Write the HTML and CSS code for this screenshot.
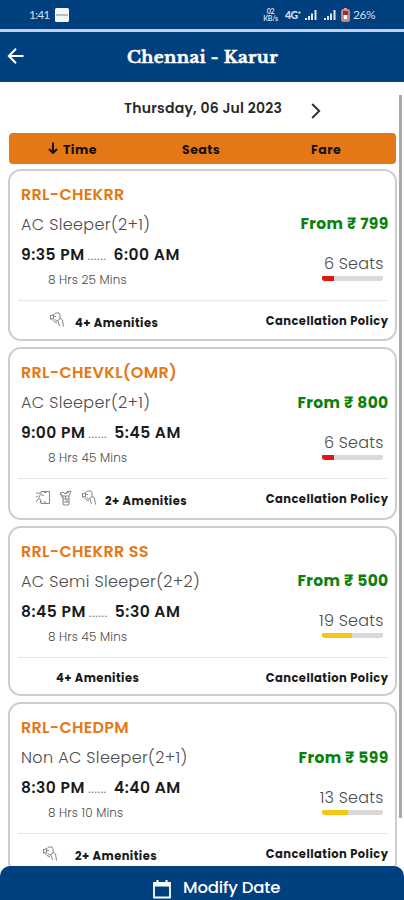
FILE: index.html
```
<!DOCTYPE html>
<html lang="en">
<head>
<meta charset="utf-8">
<title>Chennai - Karur</title>
<link rel="stylesheet" href="styles.css">
</head>
<body>
<svg class="defs" width="0" height="0">
  <defs>
    <symbol id="charger" viewBox="0 0 16 16">
      <path d="M5.500 2.500L6.500 1H10l1 1.500V7l-3 2-2.500-1.500M1.500 4l3-1.500v4.500L1.500 6.500M1.500 3v4.500M4.500 4.500H7M3 7.500l2 2 3 1.500M11 6l2.500 2 1 6.500M9 9l1.500 5"/>
    </symbol>
    <symbol id="exit" viewBox="0 0 16 16">
      <path d="M6 4V1.500h8.500v12H6V11M1 3l3 0 2.500 2L9 5.500M5 5L3.500 8.500 6 10l-1 3M3.500 8.500L1 12M1 7l2-1M9 2.500h2.500M8.500 12H11"/>
    </symbol>
    <symbol id="bottle" viewBox="0 0 16 16">
      <path d="M5 6h6v8.500q-3 1.500-6 0zM5 6L2 3l3-1 2 2 2-2.500L13 1l-2 5M6 3.500l5-1M5 9h6M5 12h6M7.500 6v3M9 9v3M2.500 4l2 4"/>
    </symbol>
    <symbol id="signal" viewBox="0 0 12 10">
      <path d="M0 8h2v2H0zM3 6h2v4H3zM6 3.500h2V10H6zM9.500 0h2v10h-2z"/>
    </symbol>
  </defs>
</svg>

<div class="status">
  <span class="clock">1:41</span>
  <svg class="note" viewBox="0 0 14 14"><rect width="14" height="14" rx="1.500" fill="#f4f5f8"/><path d="M1 7h12" stroke="#8296b4" stroke-width="1.200"/></svg>
  <div class="rate"><span>02</span><span>KB/s</span></div>
  <span class="net">4G⁺</span>
  <svg class="sig"><use href="#signal"/></svg>
  <svg class="sig second"><use href="#signal"/></svg>
  <svg class="battery" viewBox="0 0 9 14"><path d="M3 1h3" stroke="#e79a8b" stroke-width="2"/><rect x="1" y="2" width="7" height="11" rx="1" fill="#7c3b4b" stroke="#ee9d8c" stroke-width="1.500"/><path d="M2.500 7h4v4.500h-4z" fill="#fff"/></svg>
  <span class="pct">26%</span>
</div>
<header class="appbar">
  <svg class="back" viewBox="0 0 18 18"><path d="M16.500 9H2M9 1.800L1.800 9 9 16.200"/></svg>
  <h1>Chennai - Karur</h1>
</header>

<main class="content">
  <div class="date">
    <span>Thursday, 06 Jul 2023</span>
    <svg class="next" viewBox="0 0 10 16"><path d="M1.200 1l7 7-7 7"/></svg>
  </div>
  <div class="sort">
    <div class="time"><svg viewBox="0 0 10 12"><path d="M5 .5v10.500M1 7l4 4 4-4"/></svg><span>Time</span></div>
    <div class="seat-sort">Seats</div>
    <div class="fare-sort">Fare</div>
  </div>

  <section class="card">
    <div class="trip">
      <div>
        <h2 class="name">RRL-CHEKRR</h2>
        <p class="type">AC Sleeper(2+1)</p>
        <p class="times"><b>9:35 PM</b><i>......</i><b>6:00 AM</b></p>
        <p class="duration">8 Hrs 25 Mins</p>
      </div>
      <div class="side">
        <p class="price">From ₹ 799</p>
        <p class="seats">6 Seats</p>
        <div class="meter low"><span style="width:19%"></span></div>
      </div>
    </div>
    <div class="foot">
      <div class="amenities one"><svg><use href="#charger"/></svg><b>4+ Amenities</b></div>
      <span class="policy">Cancellation Policy</span>
    </div>
  </section>

  <section class="card">
    <div class="trip">
      <div>
        <h2 class="name">RRL-CHEVKL(OMR)</h2>
        <p class="type">AC Sleeper(2+1)</p>
        <p class="times"><b>9:00 PM</b><i>......</i><b>5:45 AM</b></p>
        <p class="duration">8 Hrs 45 Mins</p>
      </div>
      <div class="side">
        <p class="price">From ₹ 800</p>
        <p class="seats">6 Seats</p>
        <div class="meter low"><span style="width:19%"></span></div>
      </div>
    </div>
    <div class="foot">
      <div class="amenities three"><svg><use href="#exit"/></svg><svg><use href="#bottle"/></svg><svg><use href="#charger"/></svg><b>2+ Amenities</b></div>
      <span class="policy">Cancellation Policy</span>
    </div>
  </section>

  <section class="card short">
    <div class="trip">
      <div>
        <h2 class="name">RRL-CHEKRR SS</h2>
        <p class="type">AC Semi Sleeper(2+2)</p>
        <p class="times"><b>8:45 PM</b><i>......</i><b>5:30 AM</b></p>
        <p class="duration">8 Hrs 45 Mins</p>
      </div>
      <div class="side">
        <p class="price">From ₹ 500</p>
        <p class="seats">19 Seats</p>
        <div class="meter"><span style="width:49%"></span></div>
      </div>
    </div>
    <div class="foot">
      <div class="amenities none"><b>4+ Amenities</b></div>
      <span class="policy">Cancellation Policy</span>
    </div>
  </section>

  <section class="card">
    <div class="trip">
      <div>
        <h2 class="name">RRL-CHEDPM</h2>
        <p class="type">Non AC Sleeper(2+1)</p>
        <p class="times"><b>8:30 PM</b><i>......</i><b>4:40 AM</b></p>
        <p class="duration">8 Hrs 10 Mins</p>
      </div>
      <div class="side">
        <p class="price">From ₹ 599</p>
        <p class="seats">13 Seats</p>
        <div class="meter"><span style="width:42%"></span></div>
      </div>
    </div>
    <div class="foot">
      <div class="amenities last"><svg><use href="#charger"/></svg><b>2+ Amenities</b></div>
      <span class="policy">Cancellation Policy</span>
    </div>
  </section>
</main>

<div class="scrollbar"></div>
<footer class="modify">
  <svg viewBox="0 0 20 20"><path d="M2 4h16v14.500H2z" fill="none" stroke="#fff" stroke-width="1.800"/><path d="M2 4h16v3.500H2zM4.500 1h2v4h-2zM13.500 1h2v4h-2z" fill="#fff"/></svg>
  <span>Modify Date</span>
</footer>
</body>
</html>
```
FILE: styles.css
```
* { box-sizing: border-box; margin: 0; padding: 0; }

body {
  width: 404px;
  height: 900px;
  overflow: hidden;
  position: relative;
  background: #fff;
  color: #1a1a1a;
  font-family: Poppins, Inter, sans-serif;
}

.defs { position: absolute; }

/* status bar */
.status {
  display: flex;
  align-items: center;
  height: 32px;
  padding: 0 0 0 29px;
  border-bottom: 3px solid #c6cfe8;
  background: #00407f;
  color: #d5deeb;
  font-family: Lato, sans-serif;
  font-size: 13px;
}
.clock { width: 26px; letter-spacing: -.9px; font-size: 12px; }
.note { width: 14px; height: 14px; }
.rate {
  display: flex;
  flex-direction: column;
  width: 15px;
  margin-left: 194px;
  font-size: 7px;
  line-height: 6.500px;
  font-weight: 700;
  text-align: center;
  letter-spacing: -.2px;
}
.net { width: 19px; margin-left: 7px; font-size: 10.500px; font-weight: 900; letter-spacing: -.6px; }
.sig { width: 12px; height: 10px; fill: #dfe6f0; margin-left: 1px; }
.sig.second { margin-left: 7px; }
.battery { width: 9px; height: 14px; margin-left: 5px; }
.pct { margin-left: 3px; font-size: 12px; letter-spacing: -.4px; }

/* title bar */
.appbar {
  display: flex;
  align-items: center;
  height: 50px;
  background: #00407f;
  color: #fff;
}
.back { width: 18px; height: 18px; margin: -2px 0 0 7px; fill: none; stroke: #fff; stroke-width: 2; }
.appbar h1 {
  margin: 2px 0 0 102px;
  font: 700 17px/24px "Libre Baskerville", "DejaVu Serif Condensed", "DejaVu Serif", serif;
  letter-spacing: .32px;
  -webkit-text-stroke: .5px #fff;
  white-space: nowrap;
}

.content { padding: 0 7px 0 8px; }

.date {
  display: flex;
  align-items: center;
  height: 51px;
  padding: 2px 0 0 116px;
  font-size: 14px;
  font-weight: 600;
  letter-spacing: .22px;
  color: #2a2a2a;
}
.date span { width: 187px; }
.next { width: 10px; height: 16px; margin-top: 4px; fill: none; stroke: #333; stroke-width: 2; }

.sort {
  display: flex;
  align-items: center;
  height: 31px;
  margin: 0 0 4.700px 1px;
  padding-top: 2px;
  width: 387px;
  border-radius: 4px;
  background: #e47716;
  color: #17110b;
  font-size: 12.500px;
  font-weight: 700;
  letter-spacing: .45px;
}
.time { display: flex; align-items: center; width: 173px; padding-left: 39px; }
.time svg { width: 10px; height: 12px; margin: -3px 5px 0 0; fill: none; stroke: #17110b; stroke-width: 2; }
.seat-sort { width: 129px; }

/* trip cards */
.card {
  height: 172.500px;
  margin-bottom: 6px;
  padding: 9px 7px 0 11px;
  border: 2px solid #cdcdcd;
  border-radius: 13px;
}
.card.short { height: 170.500px; }
.trip {
  display: flex;
  justify-content: space-between;
  height: 121px;
  margin-left: -3px;
  padding-left: 3px;
  border-bottom: 1px solid #e6e6e6;
}
.name {
  font-size: 16px;
  line-height: 30px;
  font-weight: 600;
  letter-spacing: .3px;
  color: #e47716;
  white-space: nowrap;
}
.type {
  font-size: 16px;
  line-height: 30px;
  font-weight: 300;
  letter-spacing: .35px;
  color: #4c4c4c;
  white-space: nowrap;
}
.times {
  display: flex;
  font-size: 15.500px;
  line-height: 29px;
  letter-spacing: .5px;
}
.times b { font-weight: 600; }
.times i { width: 29px; padding-left: 3px; color: #777; font-style: normal; font-weight: 300; font-size: 15px; letter-spacing: .4px; }
.duration {
  padding-left: 27px;
  font-size: 12px;
  line-height: 22px;
  font-weight: 300;
  letter-spacing: .15px;
  color: #4c4c4c;
}
.side { display: flex; flex-direction: column; align-items: flex-end; padding-top: 29.500px; }
.price {
  font-size: 15.500px;
  line-height: 30px;
  font-weight: 700;
  color: #0c800c;
  letter-spacing: .36px;
  margin-right: -.6px;
}
.seats {
  margin: 12px 4.500px 0 0;
  font-size: 16px;
  line-height: 25px;
  font-weight: 300;
  letter-spacing: .2px;
  color: #4c4c4c;
}
.meter {
  width: 61px;
  height: 5px;
  margin: 0 5px 0 0;
  border-radius: 1px 1px 3px 3px;
  background: #d9d9d6;
  overflow: hidden;
}
.meter span { display: block; height: 5px; background: #f9c515; }
.meter.low span { background: #e3170f; }

.foot { display: flex; justify-content: space-between; padding-top: 10px; }
.amenities { display: flex; align-items: center; height: 25px; font-size: 11.500px; }
.amenities svg { width: 16px; height: 16px; margin-top: -6px; fill: none; stroke: #858585; stroke-width: 1; }
.amenities b { font-weight: 700; letter-spacing: .45px; }
.one { padding-left: 28px; }
.one b { margin-left: 10px; }
.three { padding-left: 14px; }
.three svg { margin-top: -8px; }
.three svg + svg { margin-left: 7px; }
.three b { margin-left: 8px; }
.none { padding-left: 35px; height: 21px; }
.last { padding-left: 21px; }
.last b { margin-left: 17px; }
.policy {
  font-size: 11.500px;
  line-height: 20px;
  font-weight: 700;
  letter-spacing: .45px;
  margin-right: -.4px;
}

.scrollbar {
  position: absolute;
  top: 95px;
  right: 2px;
  width: 3px;
  height: 723px;
  background: #aaa;
}

.modify {
  position: absolute;
  left: 0;
  right: 0;
  bottom: 0;
  display: flex;
  align-items: center;
  height: 34px;
  padding: 9px 0 0 152px;
  border-radius: 10px 10px 0 0;
  background: #00407f;
  color: #fff;
  font-size: 16.500px;
  font-weight: 500;
  letter-spacing: -.17px;
}
.modify svg { width: 20px; height: 20px; margin: 2px 11px 0 0; }
```
